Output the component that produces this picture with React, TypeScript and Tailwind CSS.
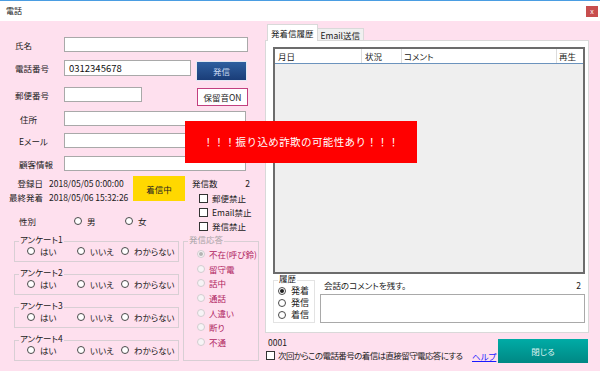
import React from 'react';

function Radio({ checked = false, disabled = false }: { checked?: boolean; disabled?: boolean }) {
  return (
    <span
      className={`w-[8px] h-[8px] shrink-0 rounded-full border flex items-center justify-center ${
        disabled ? 'border-[#d2cdd0] bg-[#f7f4f6]' : 'border-[#4a4a4a] bg-white'
      }`}
    >
      {checked && (
        <span className={`w-[4px] h-[4px] rounded-full ${disabled ? 'bg-[#b4b4b4]' : 'bg-[#1e1e1e]'}`} />
      )}
    </span>
  );
}

function Checkbox() {
  return <span className="w-[9px] h-[9px] shrink-0 border border-[#333] bg-white" />;
}

function Box({ className = '' }: { className?: string }) {
  return <div className={`h-[15px] border border-[#a9a9a9] bg-white ${className}`} />;
}

const answers = ['はい', 'いいえ', 'わからない'];
const responses = ['不在(呼び鈴)', '留守電', '話中', '通話', '人違い', '断り', '不通'];

function LeftColumn() {
  return (
    <div className="w-[262px] pt-[16px] flex flex-col">
      {/* 氏名 */}
      <div className="flex items-center h-[15px]">
        <span className="w-[64px] pl-[15px]">氏名</span>
        <Box className="w-[184px]" />
      </div>

      {/* 電話番号 */}
      <div className="mt-[8px] flex items-start">
        <span className="w-[64px] pl-[15px] h-[16px] flex items-center">電話番号</span>
        <div className="w-[127px] h-[16px] border border-[#a9a9a9] bg-white flex items-center pl-[4px] text-[9.5px] text-[#111]">
          0312345678
        </div>
        <button className="ml-[5px] mt-[1px] w-[51px] h-[20px] border border-[#e4e9f2] bg-gradient-to-b from-[#2f5f9f] to-[#1a3d78] text-[#c9d9f2] flex items-center justify-center">
          発信
        </button>
      </div>

      {/* 郵便番号 */}
      <div className="mt-[6px] flex items-start">
        <span className="w-[64px] pl-[15px] h-[15px] flex items-center">郵便番号</span>
        <Box className="w-[78px]" />
        <button className="ml-[55px] mt-[1px] w-[51px] h-[18px] border border-[#c2407f] bg-white text-[#222] flex items-center justify-center">
          保留音ON
        </button>
      </div>

      {/* 住所 / Eメール / 顧客情報 */}
      <div className="mt-[5px] flex items-center h-[15px]">
        <span className="w-[64px] pl-[20px]">住所</span>
        <Box className="w-[182px]" />
      </div>
      <div className="mt-[7px] flex items-center h-[15px]">
        <span className="w-[64px] pl-[19px]">Eメール</span>
        <Box className="w-[182px]" />
      </div>
      <div className="mt-[8px] flex items-center h-[15px]">
        <span className="w-[64px] pl-[19px]">顧客情報</span>
        <Box className="w-[182px]" />
      </div>

      {/* info row */}
      <div className="mt-[5px] flex">
        <div className="w-[185px] flex flex-col">
          <div className="flex">
            <div className="w-[133px] pt-[1px] flex flex-col gap-[2px]">
              <div className="h-[12px] flex items-center">
                <span className="w-[43px] text-right">登録日</span>
                <span className="ml-[6px]">2018/05/05 0:00:00</span>
              </div>
              <div className="h-[12px] flex items-center">
                <span className="w-[43px] text-right">最終発着</span>
                <span className="ml-[6px]">2018/05/06 15:32:26</span>
              </div>
            </div>
            <div className="w-[52px] h-[25px] bg-[#ffd800] flex items-center justify-center text-[#222]">着信中</div>
          </div>
          <div className="mt-[12px] h-[12px] flex items-center">
            <span className="w-[74px] pl-[19px]">性別</span>
            <Radio />
            <span className="ml-[5px] w-[38px]">男</span>
            <Radio />
            <span className="ml-[5px]">女</span>
          </div>
        </div>
        <div className="ml-[7px] w-[58px] flex flex-col">
          <div className="h-[13px] flex items-center justify-between">
            <span>発信数</span>
            <span>2</span>
          </div>
          <div className="mt-[2px] pl-[7px] flex flex-col">
            {['郵便禁止', 'Email禁止', '発信禁止'].map((t) => (
              <div key={t} className="h-[14px] flex items-center gap-[4px] whitespace-nowrap">
                <Checkbox />
                <span>{t}</span>
              </div>
            ))}
          </div>
        </div>
      </div>

      {/* questionnaires + response */}
      <div className="mt-[2px] flex">
        <div className="ml-[14px] w-[165px] flex flex-col gap-[6px]">
          {[1, 2, 3, 4].map((n) => (
            <fieldset key={n} className="border border-[#d8cfd4] pb-[6px]">
              <legend className="ml-[4px] px-[1px] h-[12px] leading-[8px] pb-[4px]">アンケート{n}</legend>
              <div className="h-[8px] flex items-center pl-[12px]">
                {answers.map((a, i) => (
                  <div key={a} className={`flex items-center ${i === 0 ? 'w-[50px]' : i === 1 ? 'w-[44px]' : ''}`}>
                    <Radio />
                    <span className="ml-[5px]">{a}</span>
                  </div>
                ))}
              </div>
            </fieldset>
          ))}
        </div>
        <fieldset className="ml-[4px] w-[76px] border border-[#d8cfd4] pb-[11px]">
          <legend className="ml-[4px] px-[1px] h-[12px] leading-[8px] pb-[4px] text-[#a9a4a7]">発信応答</legend>
          {responses.map((r, i) => (
            <div key={r} className="h-[14.6px] flex items-center pl-[13px]">
              <Radio disabled checked={i === 0} />
              <span className="ml-[4px] text-[#b0245f] whitespace-nowrap">{r}</span>
            </div>
          ))}
        </fieldset>
      </div>
    </div>
  );
}

function RightColumn() {
  return (
    <div className="ml-[3px] w-[324px] pt-[3px] flex flex-col">
      {/* tabs */}
      <div className="h-[16px] pl-[2px] flex items-end">
        <div className="relative z-10 -mb-px h-[17px] px-[3px] bg-white border border-b-0 border-[#d9d9d9] flex items-center">
          発着信履歴
        </div>
        <div className="h-[12px] px-[3px] bg-[#f0f0f0] border border-b-0 border-l-0 border-[#d9d9d9] flex items-center">
          Email送信
        </div>
      </div>

      {/* tab panel */}
      <div className="h-[293px] border border-[#d9d9d9] bg-white pt-[6px] pl-[7px] pr-[3px] flex flex-col">
        <div className="h-[227px] border-2 border-[#6c6c6c] bg-[#efefef] flex flex-col">
          <div className="h-[15px] bg-white border-b border-[#6b93bd] flex">
            <div className="w-[87px] border-r border-[#dcdcdc] pl-[3px] flex items-center">月日</div>
            <div className="w-[40px] border-r border-[#dcdcdc] pl-[3px] flex items-center">状況</div>
            <div className="w-[155px] border-r border-[#dcdcdc] pl-[2px] flex items-center">コメント</div>
            <div className="flex-1 pl-[2px] flex items-center">再生</div>
          </div>
        </div>

        <div className="flex">
          <fieldset className="w-[42px] border border-[#e3e3e3] pb-[1px]">
            <legend className="ml-[4px] px-[1px] h-[12px] leading-[8px] pb-[4px]">履歴</legend>
            <div className="-mt-[1px] flex flex-col">
              {['発着', '発信', '着信'].map((t, i) => (
                <div key={t} className="h-[12px] pl-[4px] flex items-center">
                  <Radio checked={i === 0} />
                  <span className="ml-[5px] text-[9px]">{t}</span>
                </div>
              ))}
            </div>
          </fieldset>
          <div className="ml-[5px] flex-1 pt-[5px] flex flex-col">
            <div className="h-[12px] px-[4px] flex items-center justify-between">
              <span>会話のコメントを残す。</span>
              <span>2</span>
            </div>
            <div className="mt-[3px] h-[29px] border border-[#a9a9a9] bg-white" />
          </div>
        </div>
      </div>

      {/* footer */}
      <div className="flex items-start">
        <div className="w-[207px] flex flex-col">
          <div className="mt-[3px] pl-[3px] h-[12px] flex items-center">0001</div>
          <div className="mt-[1px] h-[12px] pl-[1px] flex items-center gap-[3px] whitespace-nowrap">
            <Checkbox />
            <span className="tracking-[-0.6px]">次回からこの電話番号の着信は直接留守電応答にする</span>
          </div>
        </div>
        <a className="mt-[17px] w-[26px] h-[12px] flex items-center text-[#1a1aff] underline">ヘルプ</a>
        <button className="mt-[6px] w-[90px] h-[24px] bg-gradient-to-b from-[#00aca6] to-[#008884] text-[#dff2f1] flex items-center justify-center">
          閉じる
        </button>
      </div>
    </div>
  );
}

export default function App() {
  return (
    <div className="w-[600px] h-[371px] overflow-hidden bg-white font-['Noto_Sans_CJK_JP',sans-serif] text-[8.5px] leading-[12px] text-[#1a1a1a] [font-feature-settings:'palt']">
      {/* title bar */}
      <div className="h-[21px] border-t border-[#4a9de2] flex items-start justify-between">
        <span className="pl-[6px] pt-[4px] text-[8px]">電話</span>
        <div className="mt-[5px] mr-[2px] w-[12px] h-[11px] bg-[#c74e4e] flex items-center justify-center text-white text-[7px] leading-none">
          x
        </div>
      </div>

      <div className="relative h-[350px] bg-[#fee0ee] flex">
        <LeftColumn />
        <RightColumn />

        {/* fraud warning */}
        <div className="absolute left-[185px] top-[100px] w-[232px] h-[42px] bg-[#ff0000] flex items-center justify-center text-white text-[10.5px] tracking-[0.4px] [font-feature-settings:normal]">
          ！！！振り込め詐欺の可能性あり！！！
        </div>
      </div>
    </div>
  );
}
